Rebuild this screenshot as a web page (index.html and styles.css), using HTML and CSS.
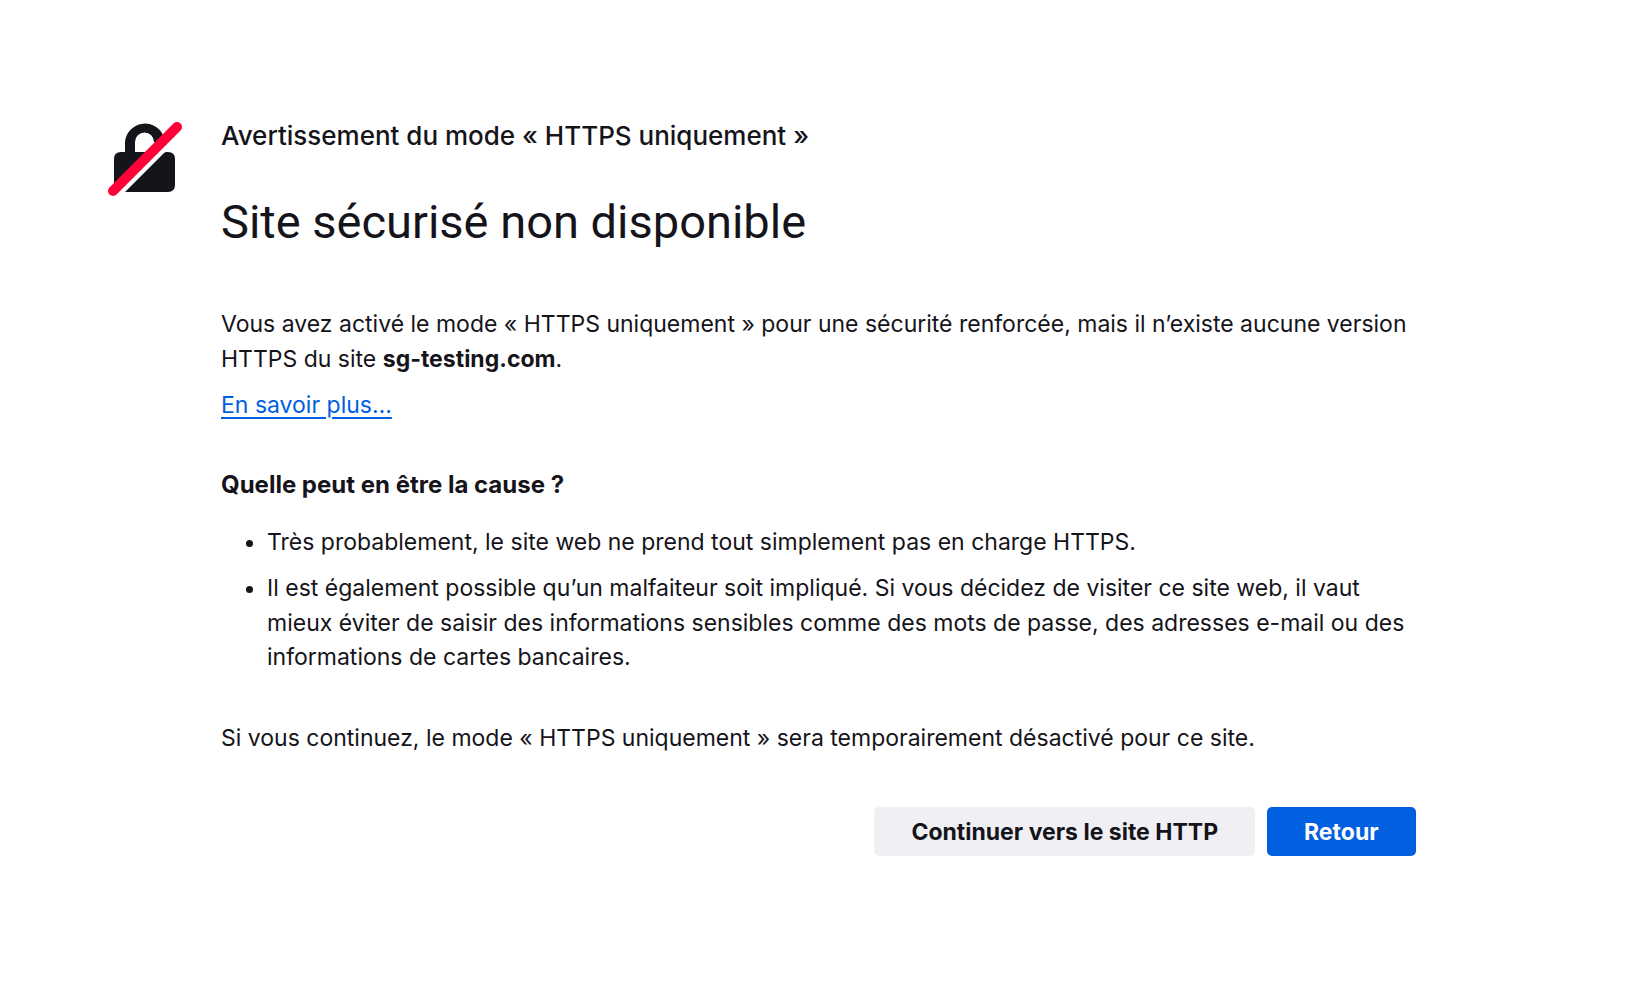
FILE: index.html
```
<!DOCTYPE html>
<html lang="fr">
<head>
  <meta charset="UTF-8">
  <title>Avertissement du mode « HTTPS uniquement »</title>
  <link rel="stylesheet" href="styles.css">
</head>
<body>

  <main class="container">
    <svg class="lock-icon" viewBox="0 0 76 76" aria-hidden="true">
      <path fill="#15141a" d="M6 68 V38 Q6 31 13 31 H17 V21 A20 20 0 0 1 55 14 L53 22 L46 21 A9 9 0 0 0 27 21 V31 H44 Z"/>
      <path fill="#15141a" d="M17 71 L56 32 Q57 31 59 31 H60 Q67 31 67 38 V64 Q67 71 60 71 Z"/>
      <path stroke="#ff0039" stroke-width="10" stroke-linecap="round" d="M5 70 L69 6"/>
    </svg>

    <div class="content">
      <p class="subtitle">Avertissement du mode « HTTPS uniquement »</p>
      <h1>Site sécurisé non disponible</h1>

      <p>Vous avez activé le mode « HTTPS uniquement » pour une sécurité renforcée, mais il n’existe aucune version HTTPS du site <strong>sg-testing.com</strong>.</p>
      <p><a href="#">En savoir plus…</a></p>

      <h2>Quelle peut en être la cause ?</h2>
      <ul>
        <li>Très probablement, le site web ne prend tout simplement pas en charge HTTPS.</li>
        <li>Il est également possible qu’un malfaiteur soit impliqué. Si vous décidez de visiter ce site web, il vaut mieux éviter de saisir des informations sensibles comme des mots de passe, des adresses e-mail ou des informations de cartes bancaires.</li>
      </ul>

      <p class="notice">Si vous continuez, le mode « HTTPS uniquement » sera temporairement désactivé pour ce site.</p>

      <div class="buttons">
        <button type="button">Continuer vers le site HTTP</button>
        <button type="button" class="primary">Retour</button>
      </div>
    </div>
  </main>

</body>
</html>
```
FILE: styles.css
```
body {
  margin: 0;
  background-color: #fff;
  color: #15141a;
  font-family: Inter, "Liberation Sans", sans-serif;
  font-size: 23px;
  line-height: 1.5;
}

.container {
  display: flex;
  align-items: flex-start;
  gap: 37px;
  padding: 121px 14% 121px 108px;
}

.lock-icon {
  flex: none;
  width: 76px;
  height: 76px;
  fill: none;
}

.content {
  flex: 1;
}

p {
  margin: 0 0 12px;
}

.subtitle {
  margin: 0 0 42px;
  font-size: 26px;
  font-weight: 500;
  line-height: 30px;
}

h1 {
  margin: 0 0 56px;
  font-family: Roboto, "Liberation Sans", sans-serif;
  font-size: 47px;
  font-weight: 400;
  line-height: 58px;
}

h2 {
  margin: 45px 0 23px;
  font-size: 24px;
  font-weight: 700;
  line-height: 34px;
}

ul {
  margin: 0;
  padding-left: 46px;
}

li {
  margin-bottom: 12px;
}

a {
  color: #0060df;
  text-decoration-thickness: 2px;
  text-underline-offset: 4px;
}

.notice {
  margin: 46px 0 52px;
}

.buttons {
  display: flex;
  justify-content: flex-end;
  gap: 12px;
}

button {
  padding: 9px 37px 7px;
  border: none;
  border-radius: 5px;
  background-color: #f0f0f4;
  color: #15141a;
  font: inherit;
  font-weight: 700;
  line-height: 33px;
  cursor: pointer;
}

button:hover {
  background-color: #e0e0e6;
}

.primary {
  background-color: #0060df;
  color: #fbfbfe;
}

.primary:hover {
  background-color: #0250bb;
}
```
